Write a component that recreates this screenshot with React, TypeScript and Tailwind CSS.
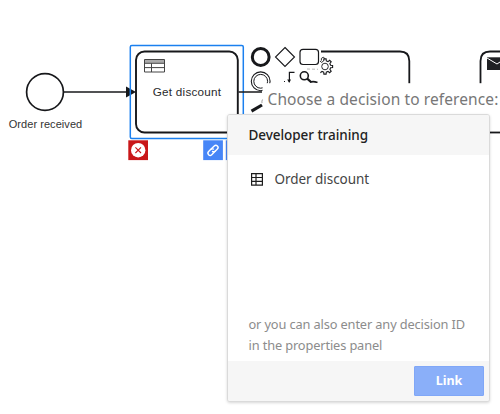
import React from "react";

function Diagram() {
  return (
    <svg className="absolute inset-0" width="500" height="414" viewBox="0 0 500 414" fill="none" stroke="#17181b">
      {/* start event and flow */}
      <circle cx="45" cy="92" r="18.4" strokeWidth="1.7" />
      <path d="M64 92H128" strokeWidth="1.7" />
      <path d="M126 86.5L136 92L126 97.5Z" fill="#17181b" stroke="none" />
      <text x="8.7" y="127.6" fontSize="11" textLength="73.5" fill="#333" stroke="none" className="font-['Liberation_Sans',Arial,sans-serif]">Order received</text>

      {/* selected task */}
      <rect x="130.3" y="45.5" width="113" height="93" rx="1.5" stroke="#1b80ef" strokeWidth="1.5" />
      <rect x="136" y="51.5" width="101.8" height="81" rx="8.5" strokeWidth="1.9" />
      <rect x="144.5" y="59.5" width="20" height="3.5" fill="#aaa" stroke="none" />
      <path d="M144.5 59.5H164.5V72H144.5ZM144.5 63.3H164.5M144.5 67.6H164.5M151.5 63.3V72" stroke="#444" strokeWidth="1" />
      <text x="152.7" y="95.6" fontSize="11.7" textLength="68.4" fill="#2a2b2d" stroke="none" className="font-['Liberation_Sans',Arial,sans-serif]">Get discount</text>
      <path d="M238.5 92H262" strokeWidth="1.5" />

      {/* tasks behind the menu */}
      <path d="M321 51.5H400Q409.3 51.5 409.3 61V84M480.5 84V61Q480.5 51.5 490 51.5H500" strokeWidth="1.8" />
      <path d="M487 57.3H500V70H487Z" fill="#202124" stroke="none" />
      <path d="M487 58L497 64L500 62" stroke="#fff" />
      <path d="M490 132.5H500" strokeWidth="1.8" />

      {/* context pad */}
      <circle cx="260.7" cy="57" r="8.4" strokeWidth="3" />
      <path d="M285 47.5L294.5 57L285 66.5L275.5 57Z" strokeWidth="1.1" />
      <rect x="300" y="49.3" width="18.5" height="15.2" rx="3" strokeWidth="1.2" />
      <circle cx="260.7" cy="81.3" r="9.4" strokeWidth="1.1" />
      <circle cx="260.7" cy="81.3" r="6.9" strokeWidth="1" />
      <path d="M294.5 72.3H289.4V82" strokeWidth="1.2" />
      <path d="M287.2 79.6H291L289.2 83Z" fill="#17181b" stroke="none" />
      <path d="M284.5 81V83" strokeWidth="1" strokeDasharray="1 1" />
      <circle cx="304.3" cy="75.8" r="4" strokeWidth="1.6" />
      <path d="M307.2 78.6L311 82" strokeWidth="2.2" />
      <path d="M310 82.3Q313 80.8 317.5 82.6" strokeWidth="1.6" />
      <circle cx="325" cy="66.5" r="3.3" strokeWidth=".9" />
      <path d="M323.7 60.9L323.9 58.9H326.1L326.3 60.9L328 61.6L329.6 60.3L331.2 61.9L329.9 63.5L330.6 65.2L332.6 65.4V67.6L330.6 67.8L329.9 69.5L331.2 71.1L329.6 72.7L328 71.4L326.3 72.1L326.1 74.1H323.9L323.7 72.1L322 71.4L320.4 72.7" strokeWidth="1.1" />
      <path d="M320 61L321.6 62.4L323.7 60.9M321.4 60.6V58.4L323.2 57.2L325 58.6" strokeWidth=".9" />
      <path d="M307 69L318 69.3" stroke="#999" strokeWidth=".7" strokeDasharray="3 2" />
      <rect x="262.6" y="83.2" width="238" height="31" fill="#fff" stroke="none" />
      <path d="M251.5 111.2L262 105" strokeWidth="3.1" />
      <path d="M262.5 99.5Q261.6 101 262 103" strokeWidth=".7" stroke="#777" />

      {/* delete and link actions */}
      <rect x="128.3" y="140.3" width="19.7" height="19.8" fill="#c91719" stroke="none" />
      <circle cx="138.2" cy="150.2" r="7.2" fill="#fff" stroke="none" />
      <path d="M135.4 147.4L141 153M141 147.4L135.4 153" stroke="#c91719" strokeWidth="1.1" />
      <rect x="203.2" y="140.3" width="19.7" height="19.8" fill="#4786f7" stroke="none" />
      <rect x="225.8" y="140.3" width="10" height="19.8" fill="#4786f7" stroke="none" />
      <g transform="translate(213 150.3) rotate(-45)" stroke="#fff" strokeWidth="1.4" strokeLinecap="round">
        <path d="M.8 2.2H-4A2.2 2.2 0 0 1-4-2.2H-1.2Q.5-2.2 1.2-.5" />
        <path d="M-.8-2.2H4A2.2 2.2 0 0 1 4 2.2H1.2Q-.5 2.2-1.2 .5" />
      </g>
    </svg>
  );
}

function TableIcon() {
  return (
    <svg width="12" height="13" viewBox="0 0 12 13" fill="none" stroke="#1c1c1c" strokeWidth="1.2">
      <path d="M.6.7H11.4V12.2H.6ZM.6 4.5H11.4M.6 8.4H11.4M5 .7V12.2" />
    </svg>
  );
}

export default function App() {
  return (
    <main className="relative h-[414px] w-[500px] overflow-hidden bg-white">
      <Diagram />
      <h1 className="absolute left-[267.5px] top-[88px] whitespace-nowrap font-['Noto_Sans',sans-serif] text-[15.5px] font-normal leading-[22px] tracking-[0.1px] text-[#777]">
        Choose a decision to reference:
      </h1>
      <section className="absolute left-[227px] top-[114px] flex h-[288px] w-[263px] flex-col overflow-hidden rounded-[3px] border border-[#dadada] bg-white font-['Noto_Sans',sans-serif] shadow-[0_1px_3px_rgba(0,0,0,0.16)]">
        <header className="flex h-10 shrink-0 items-center bg-[#f6f6f6] pl-[20.5px] text-[13.5px] font-medium tracking-[-0.05px] text-[#222]">
          <span>Developer training</span>
        </header>
        <div className="flex flex-1 flex-col justify-between pl-[20.5px]">
          <div className="mt-[13px] flex h-[22px] items-center gap-[12px] pl-[2px] text-[13.5px] tracking-[-0.05px] text-[#444]">
            <TableIcon />
            <span>Order discount</span>
          </div>
          <p className="mb-[5px] whitespace-nowrap text-[12.8px] leading-[21px] tracking-[-0.13px] text-[#8c8c8c]">
            or you can also enter any decision ID<br />in the properties panel
          </p>
        </div>
        <footer className="flex h-10 shrink-0 items-center justify-end bg-[#f6f6f6] pr-[5px]">
          <button className="h-[30px] w-[70px] rounded-[1px] border border-[#80a7f7] bg-[#8aaff9] text-[12.5px] font-bold text-white">Link</button>
        </footer>
      </section>
    </main>
  );
}
